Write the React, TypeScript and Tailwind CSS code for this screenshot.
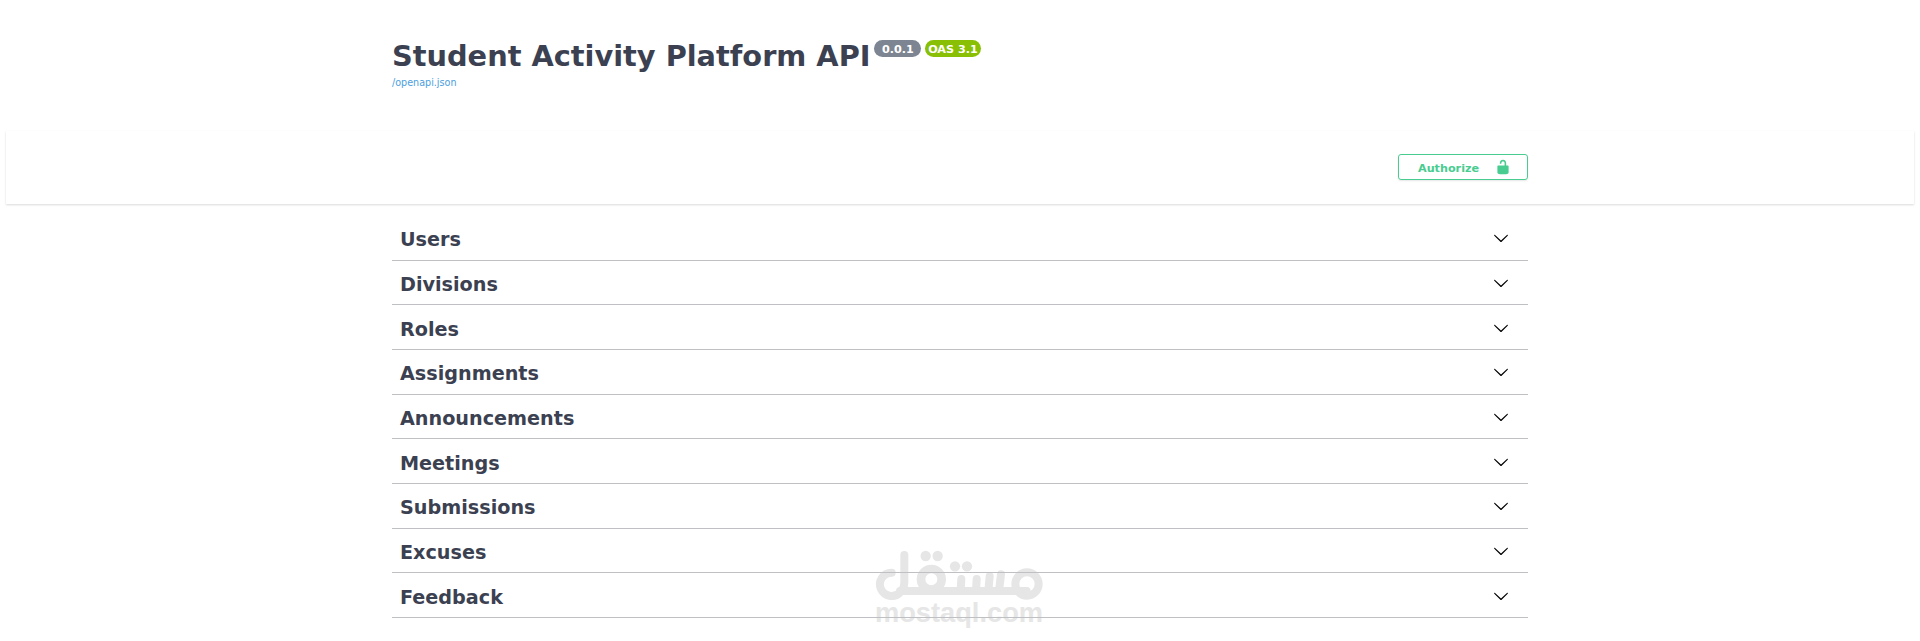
const TAGS = [
  "Users",
  "Divisions",
  "Roles",
  "Assignments",
  "Announcements",
  "Meetings",
  "Submissions",
  "Excuses",
  "Feedback",
];

function UnlockIcon() {
  return (
    <svg width="16" height="16" viewBox="0 0 20 20" fill="currentColor" aria-hidden="true">
      <path d="M15.8 8H14V5.6C14 2.703 12.665 1 10 1 7.334 1 6 2.703 6 5.6V6h2v-.801C8 3.754 8.797 3 10 3c1.203 0 2 .754 2 2.199V8H4c-.553 0-1 .646-1 1.199V17c0 .549.428 1.139.951 1.307l1.197.387C5.672 18.861 6.55 19 7.1 19h5.8c.549 0 1.428-.139 1.951-.307l1.196-.387c.524-.167.953-.757.953-1.306V9.199C17 8.646 16.352 8 15.8 8z" />
    </svg>
  );
}

function ArrowDown() {
  return (
    <svg width="16" height="16" viewBox="0 0 20 20" aria-hidden="true">
      <path d="M17.418 6.109c.272-.268.709-.268.979 0s.271.701 0 .969l-7.908 7.83c-.27.268-.707.268-.979 0l-7.908-7.83c-.27-.268-.27-.701 0-.969.271-.268.709-.268.979 0L10 13.25l7.418-7.141z" />
    </svg>
  );
}

function Watermark() {
  return (
    <div className="pointer-events-none absolute left-[850px] top-[530px] -z-10 text-[#e6e6e6]">
      <svg width="220" height="111" viewBox="0 0 660 333" fill="none" stroke="currentColor" strokeWidth="24" strokeLinecap="round">
        <path d="M125 128a35 35 0 1 0 27 57q11-9 11-30V75" />
        <path d="M150 183H530" />
        <circle cx="244" cy="148" r="31" strokeWidth="26" />
        <circle cx="531" cy="162" r="35" />
        <path d="M334 147l-2 36M380 147l-2 36M419 139l-4 44M453 133l-6 50" />
        <g fill="currentColor" stroke="none">
          <circle cx="227" cy="78" r="15.5" />
          <circle cx="263" cy="78" r="15.5" />
          <circle cx="315" cy="109" r="15.5" />
          <circle cx="351" cy="109" r="15.5" />
        </g>
        <text
          x="75"
          y="276"
          textLength="504"
          lengthAdjust="spacingAndGlyphs"
          fill="currentColor"
          stroke="none"
          className="font-['Liberation_Sans',sans-serif] text-[82px] font-bold"
        >
          mostaql.com
        </text>
      </svg>
    </div>
  );
}

export default function App() {
  return (
    <div className="relative isolate h-[641px] overflow-hidden bg-white font-['DejaVu_Sans',sans-serif] text-[#3b4151]">
      <Watermark />

      <header className="mx-auto h-[131px] w-[1136px] pt-[39px]">
        <div className="flex items-start">
          <h2 className="text-[28.8px] leading-[35px] font-bold whitespace-nowrap">Student Activity Platform API</h2>
          <span className="ml-1 mt-px flex h-[17px] w-[47px] items-center justify-center rounded-full bg-[#7d8492] pt-[3px] text-[11.2px] font-bold text-white">
            0.0.1
          </span>
          <span className="ml-1 mt-px flex h-[17px] w-[56px] items-center justify-center rounded-full bg-[#89bf04] pt-[3px] pr-px text-[11.2px] font-bold whitespace-nowrap text-white">
            OAS 3.1
          </span>
        </div>
        <a href="#" className="mt-[3px] block text-[9.6px] leading-[12px] text-[#4a9ee0]">
          /openapi.json
        </a>
      </header>

      <section className="mx-[6px] h-[73px] bg-white shadow-[0_1px_2px_0_rgba(0,0,0,0.15)]">
        <div className="mx-auto flex w-[1136px] justify-end pt-[23px]">
          <button className="flex h-[26px] w-[130px] items-center rounded-[3px] border border-[#49cc90] pl-[19px] text-[11.2px] font-bold text-[#49cc90] shadow-[0_1px_2px_rgba(0,0,0,0.1)]">
            <span className="w-[77px] pt-1 text-left">Authorize</span>
            <UnlockIcon />
          </button>
        </div>
      </section>

      <main className="mx-auto w-[1136px] pt-[12.1px]">
        {TAGS.map((tag) => (
          <div
            key={tag}
            className="flex h-[44.65px] items-center justify-between border-b border-[#bfc0c4] pl-2 pr-[19px] pt-px"
          >
            <h3 className="pt-[4.8px] text-[19.2px] font-bold">{tag}</h3>
            <ArrowDown />
          </div>
        ))}
      </main>
    </div>
  );
}
